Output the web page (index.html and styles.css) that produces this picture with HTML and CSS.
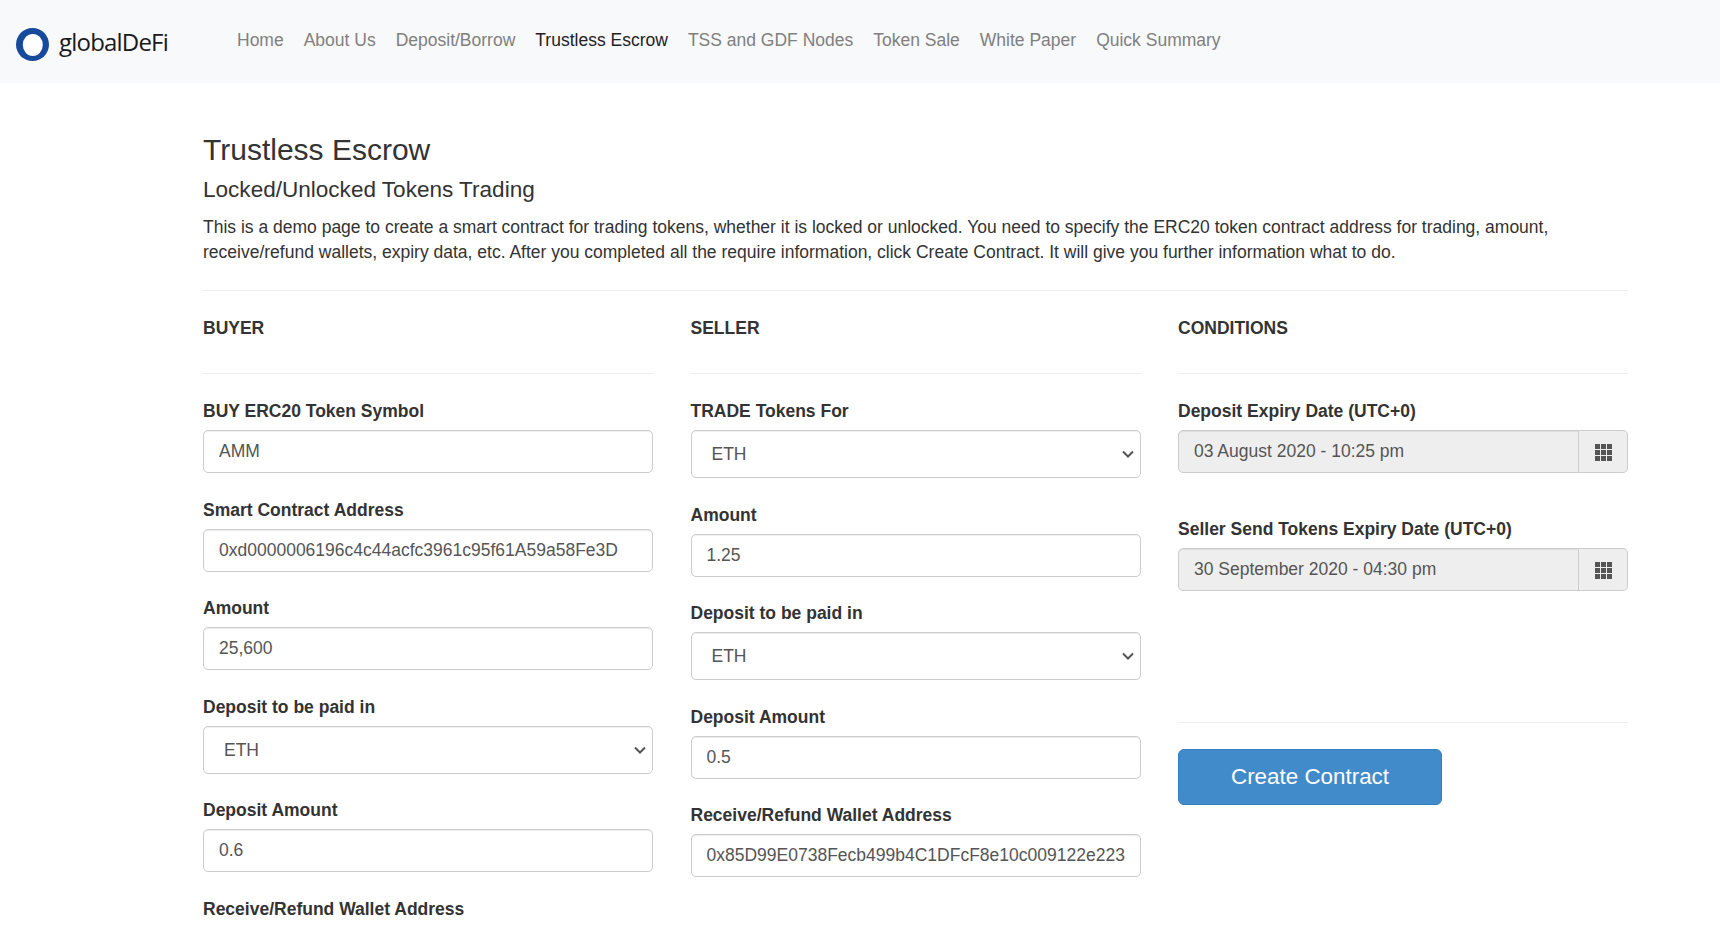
FILE: index.html
```html
<!DOCTYPE html>
<html lang="en">
  <head>
    <meta charset="UTF-8" />
    <meta name="viewport" content="width=device-width, initial-scale=1.0" />
    <title>Trustless Escrow</title>
    <link rel="stylesheet" href="styles.css">
  </head>
  <body>
    <nav class="navbar">
      <a class="brand" href="#">
        <svg class="brandRing" width="33" height="33" viewBox="0 0 33 33"><circle cx="16.500" cy="16.500" r="16.500" fill="#164a9c" /><ellipse cx="16.800" cy="16.900" rx="10" ry="11" fill="#fff" /></svg>
        <span class="brandName">globalDeFi</span>
      </a>
      <ul class="navList">
        <li><a class="navLink" href="#">Home</a></li>
        <li><a class="navLink" href="#">About Us</a></li>
        <li><a class="navLink" href="#">Deposit/Borrow</a></li>
        <li><a class="navLink active" href="#">Trustless Escrow</a></li>
        <li><a class="navLink" href="#">TSS and GDF Nodes</a></li>
        <li><a class="navLink" href="#">Token Sale</a></li>
        <li><a class="navLink" href="#">White Paper</a></li>
        <li><a class="navLink" href="#">Quick Summary</a></li>
      </ul>
    </nav>

    <main class="container">
      <h1>Trustless Escrow</h1>
      <h2>Locked/Unlocked Tokens Trading</h2>
      <p class="intro">This is a demo page to create a smart contract for trading tokens, whether it is locked or unlocked. You need to specify the ERC20 token contract address for trading, amount, receive/refund wallets, expiry data, etc. After you completed all the require information, click Create Contract. It will give you further information what to do.</p>
      <hr />

      <div class="columns">
        <!-- Buyer -->
        <section>
          <h3>BUYER</h3>
          <hr class="columnRule" />
          <div class="field">
            <label>BUY ERC20 Token Symbol</label>
            <input type="text" value="AMM" />
          </div>
          <div class="field">
            <label>Smart Contract Address</label>
            <input type="text" value="0xd0000006196c4c44acfc3961c95f61A59a58Fe3D" />
          </div>
          <div class="field">
            <label>Amount</label>
            <input type="text" value="25,600" />
          </div>
          <div class="field">
            <label>Deposit to be paid in</label>
            <select><option>ETH</option></select>
          </div>
          <div class="field">
            <label>Deposit Amount</label>
            <input type="text" value="0.6" />
          </div>
          <div class="field">
            <label>Receive/Refund Wallet Address</label>
            <input type="text" value="" />
          </div>
        </section>

        <!-- Seller -->
        <section>
          <h3>SELLER</h3>
          <hr class="columnRule" />
          <div class="field">
            <label>TRADE Tokens For</label>
            <select><option>ETH</option></select>
          </div>
          <div class="field">
            <label>Amount</label>
            <input type="text" value="1.25" />
          </div>
          <div class="field">
            <label>Deposit to be paid in</label>
            <select><option>ETH</option></select>
          </div>
          <div class="field">
            <label>Deposit Amount</label>
            <input type="text" value="0.5" />
          </div>
          <div class="field">
            <label>Receive/Refund Wallet Address</label>
            <input type="text" value="0x85D99E0738Fecb499b4C1DFcF8e10c009122e223" />
          </div>
        </section>

        <!-- Conditions -->
        <section>
          <h3>CONDITIONS</h3>
          <hr class="columnRule" />
          <div class="field dateField">
            <label>Deposit Expiry Date (UTC+0)</label>
            <div class="inputGroup">
              <input type="text" value="03 August 2020 - 10:25 pm" readonly />
              <span class="addon">
                <svg class="gridIcon" width="17" height="17" viewBox="0 0 17 17"><path d="M0 0h5v5H0zM6 0h5v5H6zM12 0h5v5h-5zM0 6h5v5H0zM6 6h5v5H6zM12 6h5v5h-5zM0 12h5v5H0zM6 12h5v5H6zM12 12h5v5h-5z" fill="#555" /></svg>
              </span>
            </div>
          </div>
          <div class="field dateField">
            <label>Seller Send Tokens Expiry Date (UTC+0)</label>
            <div class="inputGroup">
              <input type="text" value="30 September 2020 - 04:30 pm" readonly />
              <span class="addon">
                <svg class="gridIcon" width="17" height="17" viewBox="0 0 17 17"><path d="M0 0h5v5H0zM6 0h5v5H6zM12 0h5v5h-5zM0 6h5v5H0zM6 6h5v5H6zM12 6h5v5h-5zM0 12h5v5H0zM6 12h5v5H6zM12 12h5v5h-5z" fill="#555" /></svg>
              </span>
            </div>
          </div>
          <hr class="submitRule" />
          <button class="createButton" type="button">Create Contract</button>
        </section>
      </div>
    </main>
  </body>
</html>
```

FILE: styles.css
```css
html,
body {
  height: 100%;
  overflow: hidden;
}
body {
  font-family: "Liberation Sans", Arial, sans-serif;
  font-size: 17.5px;
  line-height: 24px;
  color: #333;
  background-color: #fff;
  margin: 0;
}

/* Navbar */
.navbar {
  display: flex;
  align-items: center;
  height: 83px;
  padding: 0 16px;
  background-color: #f8f9fa;
  box-sizing: border-box;
}
.brand {
  display: flex;
  align-items: center;
  gap: 10px;
  width: 221px;
  text-decoration: none;
}
.brandRing {
  margin-top: 6px;
}
.brandName {
  font-family: "Open Sans", sans-serif;
  font-size: 24px;
  letter-spacing: -0.8px;
  color: #1a1a1a;
}
.navList {
  display: flex;
  gap: 20px;
  margin: 0 0 4px;
  padding: 0;
  list-style: none;
}
.navLink {
  color: #808080;
  text-decoration: none;
}
.navLink.active {
  color: #222;
}

/* Page content */
.container {
  width: 1425px;
  margin-left: 203px;
  padding-top: 50px;
}
h1 {
  margin: 0 0 9px;
  font-size: 30px;
  font-weight: 400;
  line-height: 33px;
}
h2 {
  margin: 0 0 10px;
  font-size: 22.550px;
  font-weight: 400;
  line-height: 30px;
}
.intro {
  margin: 0 0 25px;
  line-height: 25px;
}
hr {
  margin: 0;
  border: 0;
  border-top: 1px solid #eee;
}
h3 {
  margin: 25px 0 33px;
  font-size: 17.500px;
  font-weight: 700;
  line-height: 24px;
}

/* Three form columns */
.columns {
  display: grid;
  grid-template-columns: repeat(3, 450px);
  column-gap: 37.500px;
}
.columnRule {
  margin-bottom: 25px;
}
.field {
  margin-bottom: 24.500px;
}
.dateField {
  margin-bottom: 44px;
}
label {
  display: block;
  margin-bottom: 7px;
  font-weight: 700;
}
input,
select {
  display: block;
  width: 100%;
  height: 43px;
  padding: 0 14px 0 15px;
  font-family: inherit;
  font-size: 17.500px;
  color: #555;
  background-color: #fff;
  border: 1px solid #ccc;
  border-radius: 5px;
  box-sizing: border-box;
  box-shadow: inset 0 1px 1px rgba(0, 0, 0, 0.075);
}
select {
  height: 48px;
  padding-left: 20px;
  appearance: none;
  background-image: url("data:image/svg+xml,%3Csvg xmlns='http://www.w3.org/2000/svg' width='12' height='8' viewBox='0 0 12 8'%3E%3Cpath d='M1 1.500l5 5 5-5' fill='none' stroke='%23555' stroke-width='2'/%3E%3C/svg%3E");
  background-repeat: no-repeat;
  background-position: right 6px center;
}
.inputGroup {
  display: flex;
}
.inputGroup input {
  flex: 1;
  background-color: #eee;
  border-radius: 5px 0 0 5px;
}
.addon {
  display: flex;
  align-items: center;
  justify-content: center;
  width: 49px;
  background-color: #eee;
  border: 1px solid #ccc;
  border-left: 0;
  border-radius: 0 5px 5px 0;
  box-sizing: border-box;
}
.gridIcon {
  margin-top: 2px;
}
.submitRule {
  margin-top: 131px;
}
.createButton {
  display: block;
  width: 264px;
  height: 56px;
  margin-top: 26px;
  font-family: inherit;
  font-size: 22.400px;
  color: #fff;
  background-color: #428bca;
  border: 1px solid #357ebd;
  border-radius: 6px;
  cursor: pointer;
}
```
